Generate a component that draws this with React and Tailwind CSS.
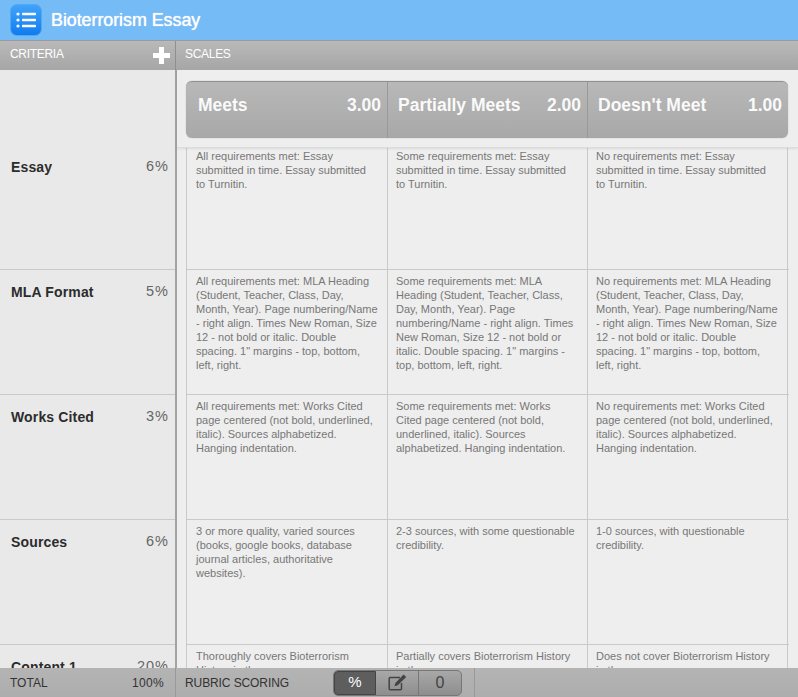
const rows = [
  { name: "Essay", pct: "6", h: "h-[122px]", pt: "pt-[1px]", lt: "pt-[10px]", cells: [
    "All requirements met: Essay submitted in time. Essay submitted to Turnitin.",
    "Some requirements met: Essay submitted in time. Essay submitted to Turnitin.",
    "No requirements met: Essay submitted in time. Essay submitted to Turnitin.",
  ]},
  { name: "MLA Format", pct: "5", h: "h-[125px]", pt: "pt-[4px]", lt: "pt-[13px]", cells: [
    "All requirements met: MLA Heading (Student, Teacher, Class, Day, Month, Year). Page numbering/Name - right align. Times New Roman, Size 12 - not bold or italic. Double spacing. 1\" margins - top, bottom, left, right.",
    "Some requirements met: MLA Heading (Student, Teacher, Class, Day, Month, Year). Page numbering/Name - right align. Times New Roman, Size 12 - not bold or italic. Double spacing. 1\" margins - top, bottom, left, right.",
    "No requirements met: MLA Heading (Student, Teacher, Class, Day, Month, Year). Page numbering/Name - right align. Times New Roman, Size 12 - not bold or italic. Double spacing. 1\" margins - top, bottom, left, right.",
  ]},
  { name: "Works Cited", pct: "3", h: "h-[125px]", pt: "pt-[4px]", lt: "pt-[13px]", cells: [
    "All requirements met: Works Cited page centered (not bold, underlined, italic). Sources alphabetized. Hanging indentation.",
    "Some requirements met: Works Cited page centered (not bold, underlined, italic). Sources alphabetized. Hanging indentation.",
    "No requirements met: Works Cited page centered (not bold, underlined, italic). Sources alphabetized. Hanging indentation.",
  ]},
  { name: "Sources", pct: "6", h: "h-[125px]", pt: "pt-[4px]", lt: "pt-[13px]", cells: [
    "3 or more quality, varied sources (books, google books, database journal articles, authoritative websites).",
    "2-3 sources, with some questionable credibility.",
    "1-0 sources, with questionable credibility.",
  ]},
  { name: "Content 1", pct: "20", h: "h-[125px]", pt: "pt-[4px]", lt: "pt-[13px]", cells: [
    "Thoroughly covers Bioterrorism History in the",
    "Partially covers Bioterrorism History in the",
    "Does not cover Bioterrorism History in the",
  ]},
];

const scales = [
  ["Meets", "3.00", "w-[201px] pl-[12px]"],
  ["Partially Meets", "2.00", "w-[200px] pl-[10px] border-l border-[#999]"],
  ["Doesn't Meet", "1.00", "w-[201px] pl-[10px] border-l border-[#999]"],
];

const cellWidths = [
  "w-[201px] pl-[9px] pr-[9px]",
  "w-[200px] pl-[8px] pr-[9px]",
  "w-[201px] pl-[8px] pr-[9px] border-r",
];

function ListIcon() {
  return (
    <svg width="20" height="16" viewBox="0 0 20 16" fill="#fff">
      <circle cx="2" cy="2" r="1.6" />
      <circle cx="2" cy="8" r="1.6" />
      <circle cx="2" cy="14" r="1.6" />
      <rect x="6" y="0.8" width="14" height="2.4" rx="0.6" />
      <rect x="6" y="6.8" width="14" height="2.4" rx="0.6" />
      <rect x="6" y="12.8" width="14" height="2.4" rx="0.6" />
    </svg>
  );
}

function EditIcon() {
  return (
    <svg width="19" height="17" viewBox="0 0 19 17" fill="none">
      <path d="M12 3.5H2.2a1 1 0 0 0-1 1v10.3a1 1 0 0 0 1 1h10.3a1 1 0 0 0 1-1V9" stroke="#444" strokeWidth="1.5" />
      <path d="M15.6 0.6l2.6 2.4-8.4 8.3-3.4 1 1-3.3z" fill="#444" />
    </svg>
  );
}

export default function App() {
  return (
    <div className="w-[798px] h-[697px] flex flex-col overflow-hidden bg-[#ebebeb] font-['Liberation_Sans',Arial,sans-serif]">
      <header className="h-[41px] shrink-0 flex items-center gap-[9px] pl-[10px] bg-[#75bbf6] border-b border-[#9a9a9a]">
        <div className="w-[32px] h-[32px] rounded-[7px] flex items-center justify-center bg-gradient-to-b from-[#3fa3fb] to-[#0b7cf0] border border-[#5aa6ea]">
          <ListIcon />
        </div>
        <h1 className="text-[18px] leading-[24px] font-normal text-white tracking-[-0.1px] [text-shadow:0_0_1px_#fff]">Bioterrorism Essay</h1>
      </header>

      <div className="h-[29px] shrink-0 flex bg-gradient-to-b from-[#b9b9b9] to-[#a6a6a6]">
        <div className="w-[176px] shrink-0 flex items-center justify-between pl-[10px] pr-[5px] border-r border-[#8f8f8f]">
          <span className="text-[12px] pb-[3px] text-white tracking-[-0.3px]">CRITERIA</span>
          <svg width="17" height="17" viewBox="0 0 17 17" fill="#fff"><path d="M6 0h5v6h6v5h-6v6H6v-6H0V6h6z" /></svg>
        </div>
        <div className="flex items-center pl-[9px]">
          <span className="text-[12px] pb-[3px] text-white tracking-[-0.3px]">SCALES</span>
        </div>
      </div>

      <div className="flex-1 min-h-0 flex overflow-hidden">
        <aside className="w-[175px] shrink-0 bg-[#e9e9e9]">
          <div className="h-[78px]" />
          {rows.map((r) => (
            <div key={r.name} className={`${r.h} ${r.lt} flex items-start justify-between pl-[11px] pr-[6px] border-b border-[#c9c9c9]`}>
              <span className="text-[14px] leading-[18px] font-bold text-[#2c2c2c] tracking-[0.15px]">{r.name}</span>
              <span className="text-[14.5px] leading-[16px] text-[#666] tracking-[1px]">{r.pct}%</span>
            </div>
          ))}
        </aside>
        <div className="w-[2px] shrink-0 bg-[#a3a3a3]" />
        <main className="flex-1 min-w-0 bg-[#eeeeee] relative">
          <div className="h-[78px] pt-[11px] pl-[9px] border-b border-[#dcdcdc] shadow-[0_1px_2px_rgba(0,0,0,0.08)] relative z-10 bg-[#eeeeee]">
            <div className="w-[602px] h-[57px] flex rounded-[6px] bg-gradient-to-b from-[#b8b8b8] to-[#a8a8a8] border-t border-[#8f8f8f] shadow-[0_0_1px_rgba(0,0,0,0.4)]">
              {scales.map(([label, val, w]) => (
                <div key={label} className={`${w} h-full flex items-center justify-between pr-[6px] pb-[10px]`}>
                  <span className="text-[17.5px] font-bold text-white/95">{label}</span>
                  <span className="text-[17.5px] font-bold text-white/95">{val}</span>
                </div>
              ))}
            </div>
          </div>
          <div className="pl-[9px]">
            {rows.map((r) => (
              <div key={r.name} className={`${r.h} w-[603px] flex border-b border-[#c9c9c9]`}>
                {r.cells.map((c, i) => (
                  <div key={i} className={`${cellWidths[i]} ${r.pt} border-l border-[#c9c9c9] text-[11px] leading-[14px] text-[#777]`}>
                    {c}
                  </div>
                ))}
              </div>
            ))}
          </div>
        </main>
      </div>

      <footer className="h-[29px] shrink-0 flex items-center bg-gradient-to-b from-[#b4b4b4] to-[#adadad] text-[12px] text-[#333]">
        <div className="w-[176px] shrink-0 h-full flex items-center justify-between pl-[10px] pr-[11px] border-r border-[#999]">
          <span>TOTAL</span>
          <span className="tracking-[0.3px]">100%</span>
        </div>
        <div className="w-[299px] shrink-0 h-full flex items-center pl-[9px] border-r border-[#999]">
          <span className="w-[148px] tracking-[-0.1px]">RUBRIC SCORING</span>
          <div className="w-[129px] h-[26px] flex rounded-[5px] border border-[#777] bg-gradient-to-b from-[#a8a8a8] to-[#8e8e8e]">
            <div className="w-[42px] flex items-center justify-center bg-[#5e5e5e] rounded-l-[4px] border border-[#444] text-[15px] text-white">%</div>
            <div className="w-[43px] flex items-center justify-center border-r border-[#777]"><EditIcon /></div>
            <div className="flex-1 flex items-center justify-center text-[16px] text-[#444]">0</div>
          </div>
        </div>
      </footer>
    </div>
  );
}
